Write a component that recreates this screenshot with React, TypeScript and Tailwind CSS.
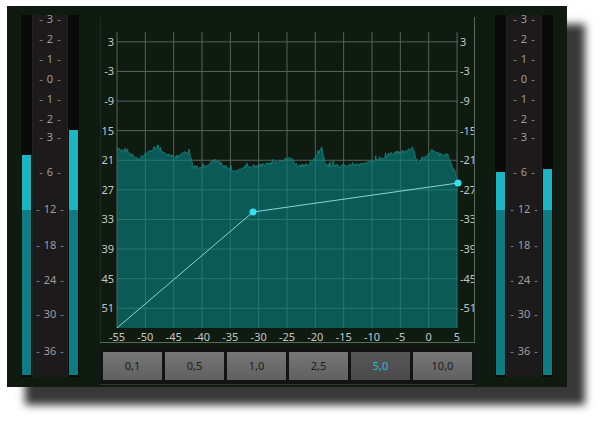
import React from "react";

const meterLabels: { t: string; y: number }[] = [
  { t: "3", y: 19 },
  { t: "2", y: 39 },
  { t: "1", y: 59 },
  { t: "0", y: 79 },
  { t: "1", y: 99 },
  { t: "2", y: 119 },
  { t: "3", y: 137 },
  { t: "6", y: 172 },
  { t: "12", y: 209 },
  { t: "18", y: 245 },
  { t: "24", y: 280 },
  { t: "30", y: 314 },
  { t: "36", y: 351 },
];

function Meter({ leftBright, rightBright }: { leftBright: string; rightBright: string }) {
  return (
    <div className="mt-[9px] w-[58px] h-[362px] flex shrink-0">
      <div className="w-[12px] h-full bg-[#0a0a0a] flex flex-col justify-end items-center pb-[2px] border-r border-[#222]">
        <div className={`w-[9px] ${leftBright} bg-[#1bb6c1]`} />
        <div className="w-[9px] h-[165px] bg-[#0d7d83]" />
      </div>
      <div className="w-[34px] h-full bg-[#1c1a1a] relative">
        {meterLabels.map((l, i) => (
          <div
            key={i}
            className="absolute left-0 right-0 h-[14px] leading-[14px] flex justify-center items-center gap-[4px] text-[11px] text-[#9e9e9e]"
            style={{ top: l.y - 15 - 7 }}
          >
            <span className="text-[#858585]">-</span>
            <span>{l.t}</span>
            <span className="text-[#858585]">-</span>
          </div>
        ))}
      </div>
      <div className="w-[12px] h-full bg-[#0a0a0a] flex flex-col justify-end items-center pb-[2px] border-l border-[#222]">
        <div className={`w-[9px] ${rightBright} bg-[#1bb6c1]`} />
        <div className="w-[9px] h-[165px] bg-[#0d7d83]" />
      </div>
    </div>
  );
}

function rng(seed: number) {
  let s = seed;
  return () => {
    s = (s * 16807) % 2147483647;
    return s / 2147483647;
  };
}

const keys: [number, number][] = [
  [117, 149], [128, 153], [138, 159], [148, 152], [158, 146], [163, 152], [175, 158], [183, 153],
  [189, 152], [193, 167], [205, 167], [212, 162], [216, 160], [222, 165], [236, 172], [246, 166],
  [258, 166], [272, 163], [282, 161], [292, 158], [297, 166], [310, 165], [318, 153], [322, 147],
  [325, 165], [340, 166], [360, 164], [380, 160], [392, 153], [405, 152], [413, 147], [417, 163],
  [425, 158], [432, 150], [440, 155], [447, 154], [452, 166], [457, 177],
];

function interp(x: number) {
  for (let i = 0; i < keys.length - 1; i++) {
    const [x0, y0] = keys[i];
    const [x1, y1] = keys[i + 1];
    if (x >= x0 && x <= x1) {
      const t = (x - x0) / (x1 - x0 || 1);
      return y0 + (y1 - y0) * t;
    }
  }
  return keys[keys.length - 1][1];
}

function Graph() {
  const X = (v: number) => 17 + ((v + 55) * 340) / 60;
  const Y = (db: number) => 15 + ((5 - db) * 296) / 60;
  const r = rng(987);
  const pts: string[] = [];
  for (let x = 117; x <= 457; x += 0.75) {
    let y = interp(x) + (r() - 0.5) * 3.5;
    if (r() < 0.12) y -= r() * 4;
    pts.push(`${(x - 100).toFixed(2)},${(y - 17).toFixed(1)}`);
  }
  const fillPath = `M17,311 L${pts.join(" L")} L357,311 Z`;
  const edgePath = `M${pts.join(" L")}`;
  const xs = Array.from({ length: 13 }, (_, i) => -55 + i * 5);
  const ys = [3, -3, -9, -15, -21, -27, -33, -39, -45, -51];
  const font = { fontFamily: "'Noto Sans', sans-serif", fontSize: 11 };

  return (
    <svg width={375} height={326} className="block">
      <defs>
        <clipPath id="fillclip">
          <path d={fillPath} />
        </clipPath>
      </defs>
      {xs.map((v, i) => (
        <line key={"v" + i} x1={X(v)} x2={X(v)} y1={15} y2={311} stroke="#56645a" strokeWidth={1} />
      ))}
      {ys.map((d, i) => (
        <line key={"h" + i} x1={17} x2={358} y1={Y(d)} y2={Y(d)} stroke="#56645a" strokeWidth={1} />
      ))}
      <path d={fillPath} fill="#0a5b57" />
      <path d={edgePath} fill="none" stroke="#178680" strokeWidth={0.8} />
      <g clipPath="url(#fillclip)">
        {xs.map((v, i) => (
          <line key={"cv" + i} x1={X(v)} x2={X(v)} y1={15} y2={311} stroke="#257872" strokeWidth={1} />
        ))}
        {ys.map((d, i) => (
          <line key={"ch" + i} x1={17} x2={358} y1={Y(d)} y2={Y(d)} stroke="#257872" strokeWidth={1} />
        ))}
      </g>
      <polyline points="17,311 153,195 358,166" fill="none" stroke="#8fd2d2" strokeWidth={1} />
      <circle cx={153} cy={195} r={3.5} fill="#34e2ec" />
      <circle cx={358} cy={166} r={3.5} fill="#34e2ec" />
      {ys.map((d, i) => (
        <text key={"ly" + i} x={14} y={Y(d) + 4} textAnchor="end" fill="#c4c8c4" style={font}>
          {d}
        </text>
      ))}
      {ys.map((d, i) => (
        <text key={"ry" + i} x={360} y={Y(d) + 4} textAnchor="start" fill="#c4c8c4" style={font}>
          {d}
        </text>
      ))}
      {xs.map((v, i) => (
        <text key={"lx" + i} x={X(v)} y={324} textAnchor="middle" fill="#c4c8c4" style={font}>
          {v}
        </text>
      ))}
      <line x1={0.5} x2={0.5} y1={0} y2={326} stroke="#1f2a21" />
      <line x1={374.5} x2={374.5} y1={0} y2={326} stroke="#5a685c" />
      <line x1={0} x2={375} y1={325.5} y2={325.5} stroke="#5a685c" />
    </svg>
  );
}

const buttons = ["0,1", "0,5", "1,0", "2,5", "5,0", "10,0"];

export default function App() {
  return (
    <div className="w-[600px] h-[421px] bg-white overflow-hidden font-['Noto_Sans',sans-serif]">
      <div className="ml-[7px] mt-[6px] w-[560px] h-[381px] bg-[#0f1a11] shadow-[18px_18px_8px_rgba(0,0,0,0.78)] flex items-start pl-[14px]">
        <Meter leftBright="h-[55px]" rightBright="h-[80px]" />
        <div className="ml-[21px] mt-[11px] w-[375px] shrink-0 flex flex-col">
          <Graph />
          <div className="mt-[5px] h-[37px] bg-[#131313] px-[3px] py-[4px] grid grid-cols-6 gap-[3px] border-b border-[#2c3a2e]">
            {buttons.map((b) => {
              const active = b === "5,0";
              return (
                <div
                  key={b}
                  className={
                    active
                      ? "flex items-center justify-center text-[11px] bg-linear-to-b from-[#575757] to-[#4a4a4a] text-[#2bbbd8]"
                      : "flex items-center justify-center text-[11px] bg-linear-to-b from-[#777777] to-[#606060] text-[#1a1a1a]"
                  }
                >
                  {b}
                </div>
              );
            })}
          </div>
        </div>
        <div className="ml-[20px]">
          <Meter leftBright="h-[38px]" rightBright="h-[41px]" />
        </div>
      </div>
    </div>
  );
}
